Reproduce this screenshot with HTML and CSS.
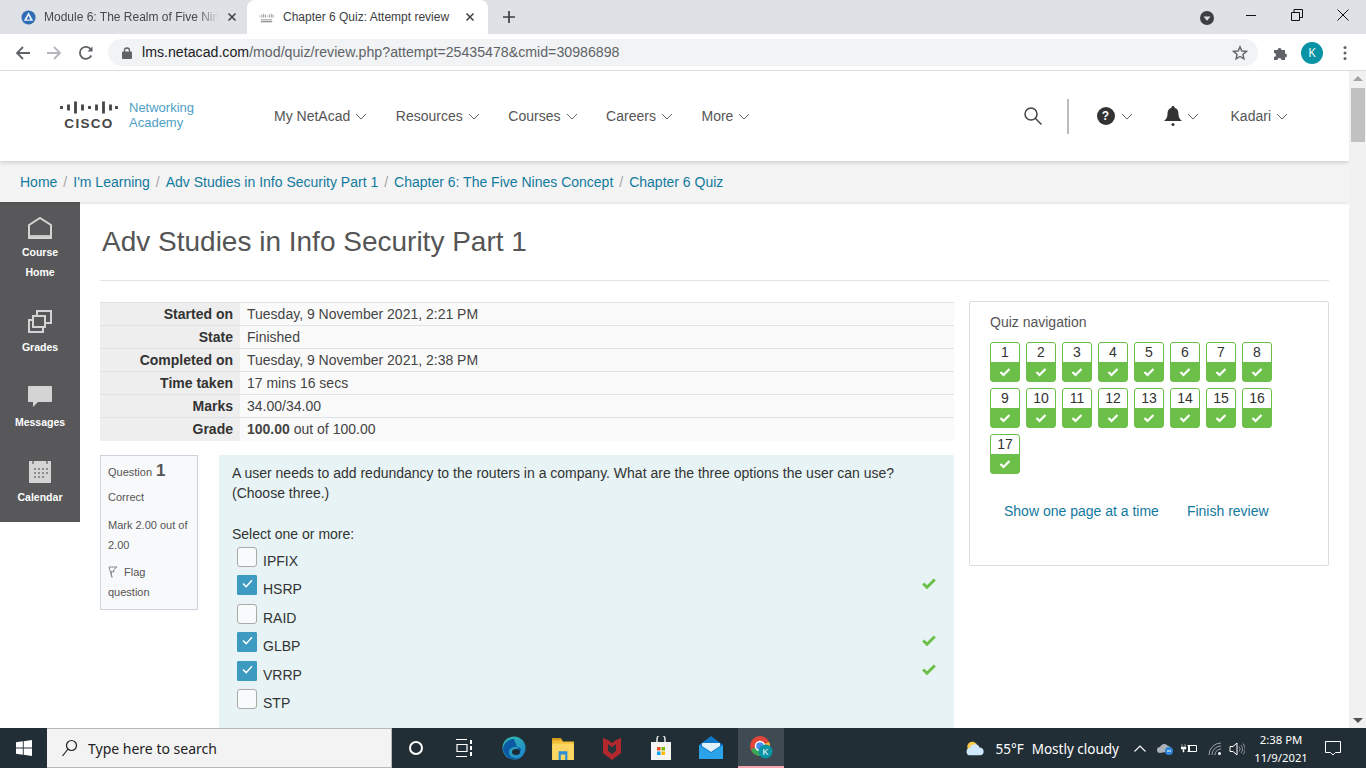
FILE: index.html
```html
<!DOCTYPE html>
<html lang="en">
<head>
<meta charset="utf-8">
<title>Chapter 6 Quiz: Attempt review</title>
<link rel="stylesheet" href="styles.css">
</head>
<body>
<div class="tabstrip">
  <div class="tab">
    <svg class="favicon" viewBox="0 0 16 16"><circle cx="8" cy="8" r="7.5" fill="#2f6db5"/><path d="M8 2.5 13 11.5H3Z" fill="#e8f1fa"/><path d="M8 6 10 10H6Z" fill="#2f6db5"/></svg>
    <span class="tab-title fade">Module 6: The Realm of Five Nine</span>
    <svg class="tab-close" viewBox="0 0 10 10"><path d="M1.5 1.5 8.5 8.5M8.5 1.5 1.5 8.5" stroke="#3c4043" stroke-width="1.5"/></svg>
  </div>
  <div class="tab active">
    <svg class="favicon" viewBox="0 0 16 16"><path d="M1 6v1M3 5v3M5 4v4M7 5v3M9 6v1M11 5v3M13 4v4M15 5v3" stroke="#8a9399" stroke-width="1"/><path d="M2 10h12v1H2zM2 12h12v1H2z" fill="#777"/></svg>
    <span class="tab-title">Chapter 6 Quiz: Attempt review</span>
    <svg class="tab-close" viewBox="0 0 10 10"><path d="M1.5 1.5 8.5 8.5M8.5 1.5 1.5 8.5" stroke="#3c4043" stroke-width="1.5"/></svg>
  </div>
  <svg class="newtab" viewBox="0 0 12 12"><path d="M6 0v12M0 6h12" stroke="#3c4043" stroke-width="1.7"/></svg>
  <div class="winctl">
    <svg class="profile-drop" viewBox="0 0 14 14"><circle cx="7" cy="7" r="7" fill="#3c4043"/><path d="M3.5 5.5h7L7 9.8Z" fill="#dee1e6"/></svg>
    <svg class="wbtn first" viewBox="0 0 12 12"><path d="M1 6.5h10" stroke="#111" stroke-width="1"/></svg>
    <svg class="wbtn" viewBox="0 0 12 12"><path d="M.5 3.5h8v8h-8zM3 3.5V.5h8.500v8H8.500" fill="none" stroke="#111"/></svg>
    <svg class="wbtn" viewBox="0 0 12 12"><path d="M.5.5l11 11M11.500.5l-11 11" stroke="#111"/></svg>
  </div>
</div>

<div class="toolbar">
  <svg class="tool" viewBox="0 0 16 16"><path d="M15 8H2M8 2 2 8l6 6" fill="none" stroke="#5f6368" stroke-width="1.800"/></svg>
  <svg class="tool" viewBox="0 0 16 16"><path d="M1 8h13M8 2l6 6-6 6" fill="none" stroke="#b4b7bb" stroke-width="1.800"/></svg>
  <svg class="tool" viewBox="0 0 16 16"><path d="M13.300 10.500A6 6 0 1 1 13 4.700" fill="none" stroke="#5f6368" stroke-width="1.800"/><path d="M14.500 1.500v5h-5Z" fill="#5f6368"/></svg>
  <div class="omnibox">
    <svg class="lock" viewBox="0 0 10 12"><path d="M2.500 5V3.500a2.500 2.500 0 0 1 5 0V5" fill="none" stroke="#5f6368" stroke-width="1.300"/><rect y="4.500" width="10" height="7.500" rx="1" fill="#5f6368"/></svg>
    <span class="url"><b>lms.netacad.com</b>/mod/quiz/review.php?attempt=25435478&amp;cmid=30986898</span>
    <svg class="star" viewBox="0 0 16 16"><path d="M8 1.800 9.800 6l4.600.4-3.500 3 1 4.500L8 11.500l-3.900 2.400 1-4.500-3.500-3L6.200 6Z" fill="none" stroke="#5f6368" stroke-width="1.400"/></svg>
  </div>
  <svg class="puzzle" viewBox="0 0 16 16"><path d="M1 5h3.500a2 2 0 1 1 4 0H12v3.500a2 2 0 1 1 0 4V15H8.500a2 2 0 1 0-4 0H1v-3a2 2 0 1 0 0-4Z" fill="#5f6368"/></svg>
  <span class="avatar">K</span>
  <svg class="kebab" viewBox="0 0 4 16"><circle cx="2" cy="2.500" r="1.500" fill="#5f6368"/><circle cx="2" cy="8" r="1.500" fill="#5f6368"/><circle cx="2" cy="13.500" r="1.500" fill="#5f6368"/></svg>
</div>

<div class="viewport">
  <div class="page">
    <header class="site-head">
      <div class="logo">
        <div class="cisco">
          <svg class="cisco-bars" viewBox="0 0 58 13"><path d="M1.500 5v3M8.500 3.500v6M15.500 .5v12M22.500 3.500v6M29.500 5v3M36.500 3.500v6M43.500 .5v12M50.500 3.500v6M56.500 5v3" stroke="#444" stroke-width="2.800"/></svg>
          <span class="cisco-word">CISCO</span>
        </div>
        <div class="na">Networking<br>Academy</div>
      </div>
      <nav class="mainnav">
        <a class="nav-item">My NetAcad<svg class="chev" viewBox="0 0 12 7"><path d="M1 1l5 5 5-5" fill="none" stroke="#666"/></svg></a>
        <a class="nav-item">Resources<svg class="chev" viewBox="0 0 12 7"><path d="M1 1l5 5 5-5" fill="none" stroke="#666"/></svg></a>
        <a class="nav-item">Courses<svg class="chev" viewBox="0 0 12 7"><path d="M1 1l5 5 5-5" fill="none" stroke="#666"/></svg></a>
        <a class="nav-item">Careers<svg class="chev" viewBox="0 0 12 7"><path d="M1 1l5 5 5-5" fill="none" stroke="#666"/></svg></a>
        <a class="nav-item">More<svg class="chev" viewBox="0 0 12 7"><path d="M1 1l5 5 5-5" fill="none" stroke="#666"/></svg></a>
      </nav>
      <div class="head-right">
        <svg class="search" viewBox="0 0 18 18"><circle cx="7" cy="7" r="6" fill="none" stroke="#444" stroke-width="1.500"/><path d="M11.500 11.500l6 6" stroke="#444" stroke-width="1.500"/></svg>
        <span class="vline"></span>
        <span class="hi help-i"><span class="help">?</span><svg class="chev" viewBox="0 0 12 7"><path d="M1 1l5 5 5-5" fill="none" stroke="#666"/></svg></span>
        <span class="hi bell-i"><svg class="bell" viewBox="0 0 18 20"><path d="M9 0c1 0 1.500.7 1.600 1.700C13.500 2.500 14.500 5 14.500 8c0 3 1 5 3.500 7H0c2.500-2 3.500-4 3.500-7 0-3 1-5.500 3.900-6.300C7.500.7 8 0 9 0Z" fill="#333"/><circle cx="9" cy="18.500" r="1.500" fill="#333"/></svg><svg class="chev" viewBox="0 0 12 7"><path d="M1 1l5 5 5-5" fill="none" stroke="#666"/></svg></span>
        <span class="hi user-i">Kadari<svg class="chev" viewBox="0 0 12 7"><path d="M1 1l5 5 5-5" fill="none" stroke="#666"/></svg></span>
      </div>
    </header>

    <div class="crumbs">
      <a>Home</a><i>/</i><a>I'm Learning</a><i>/</i><a>Adv Studies in Info Security Part 1</a><i>/</i><a>Chapter 6: The Five Nines Concept</a><i>/</i><a>Chapter 6 Quiz</a>
    </div>

    <div class="body-row">
      <aside class="side">
        <a class="side-item si-home">
          <svg class="si" viewBox="0 0 24 22"><path d="M1 8 12 1l11 7v13H1Z" fill="none" stroke="#d4d4d4" stroke-width="2"/><path d="M2 18h20v2H2z" fill="#d4d4d4" opacity=".9"/></svg>
          <span>Course<br>Home</span>
        </a>
        <a class="side-item si-grades">
          <svg class="si" viewBox="0 0 24 23"><rect x="9" y="1" width="14" height="12" fill="none" stroke="#d4d4d4" stroke-width="2"/><rect x="1" y="10" width="14" height="12" fill="#58585a" stroke="#d4d4d4" stroke-width="2"/><rect x="5" y="6" width="12" height="11" fill="#58585a" stroke="#d4d4d4" stroke-width="2"/></svg>
          <span>Grades</span>
        </a>
        <a class="side-item si-msg">
          <svg class="si" viewBox="0 0 24 21"><path d="M1 0h22c.6 0 1 .4 1 1v14c0 .6-.4 1-1 1H10l-5 5v-5H1c-.6 0-1-.4-1-1V1c0-.6.4-1 1-1Z" fill="#d4d4d4"/></svg>
          <span>Messages</span>
        </a>
        <a class="side-item si-cal">
          <svg class="si" viewBox="0 0 22 22"><rect width="22" height="22" fill="#d4d4d4"/><path d="M5 7h2v2H5zM9 7h2v2H9zM13 7h2v2h-2zM17 7h2v2h-2zM5 11h2v2H5zM9 11h2v2H9zM13 11h2v2h-2zM17 11h2v2h-2zM5 15h2v2H5zM9 15h2v2H9zM13 15h2v2h-2z" fill="#8d8d8f"/><path d="M3 0h2v3H3zM17 0h2v3h-2z" fill="#8d8d8f"/></svg>
          <span>Calendar</span>
        </a>
      </aside>

      <main class="content">
        <h2 class="course-title">Adv Studies in Info Security Part 1</h2>
        <div class="cols">
          <div class="left">
            <table class="summary">
              <tr><th>Started on</th><td>Tuesday, 9 November 2021, 2:21 PM</td></tr>
              <tr><th>State</th><td>Finished</td></tr>
              <tr><th>Completed on</th><td>Tuesday, 9 November 2021, 2:38 PM</td></tr>
              <tr><th>Time taken</th><td>17 mins 16 secs</td></tr>
              <tr><th>Marks</th><td>34.00/34.00</td></tr>
              <tr><th>Grade</th><td><b>100.00</b> out of 100.00</td></tr>
            </table>
            <div class="question">
              <div class="qinfo">
                <div class="qno">Question <b>1</b></div>
                <div class="qstate">Correct</div>
                <div class="qmark">Mark 2.00 out of 2.00</div>
                <div class="qflag"><svg class="flag" viewBox="0 0 10 12"><path d="M1 1h8L5.500 4 6 6 3 5.500 4 11.500M1 1 4 11.500" fill="none" stroke="#888"/></svg>Flag<br>question</div>
              </div>
              <div class="qbody">
                <p class="qtext">A user needs to add redundancy to the routers in a company. What are the three options the user can use?<br>(Choose three.)</p>
                <p class="qprompt">Select one or more:</p>
                <div class="opt"><span class="box"></span><span class="lbl">IPFIX</span></div>
                <div class="opt"><span class="box on"><svg viewBox="0 0 12 10"><path d="M1 5l3.500 3.500L11 1.500" fill="none" stroke="#fff" stroke-width="1.700"/></svg></span><span class="lbl">HSRP</span><svg class="tick" viewBox="0 0 14 11"><path d="M1.200 5.500 5 9.200 12.800 1.500" fill="none" stroke="#6cc04a" stroke-width="3"/></svg></div>
                <div class="opt"><span class="box"></span><span class="lbl">RAID</span></div>
                <div class="opt"><span class="box on"><svg viewBox="0 0 12 10"><path d="M1 5l3.500 3.500L11 1.500" fill="none" stroke="#fff" stroke-width="1.700"/></svg></span><span class="lbl">GLBP</span><svg class="tick" viewBox="0 0 14 11"><path d="M1.200 5.500 5 9.200 12.800 1.500" fill="none" stroke="#6cc04a" stroke-width="3"/></svg></div>
                <div class="opt"><span class="box on"><svg viewBox="0 0 12 10"><path d="M1 5l3.500 3.500L11 1.500" fill="none" stroke="#fff" stroke-width="1.700"/></svg></span><span class="lbl">VRRP</span><svg class="tick" viewBox="0 0 14 11"><path d="M1.200 5.500 5 9.200 12.800 1.500" fill="none" stroke="#6cc04a" stroke-width="3"/></svg></div>
                <div class="opt"><span class="box"></span><span class="lbl">STP</span></div>
              </div>
            </div>
          </div>
          <aside class="quiznav">
            <div class="qn-title">Quiz navigation</div>
            <div class="qn-grid" id="grid">
              <a class="qb"><span>1</span></a><a class="qb"><span>2</span></a><a class="qb"><span>3</span></a><a class="qb"><span>4</span></a><a class="qb"><span>5</span></a><a class="qb"><span>6</span></a><a class="qb"><span>7</span></a><a class="qb"><span>8</span></a><a class="qb"><span>9</span></a><a class="qb"><span>10</span></a><a class="qb"><span>11</span></a><a class="qb"><span>12</span></a><a class="qb"><span>13</span></a><a class="qb"><span>14</span></a><a class="qb"><span>15</span></a><a class="qb"><span>16</span></a><a class="qb"><span>17</span></a>
            </div>
            <div class="qn-links"><a>Show one page at a time</a><a>Finish review</a></div>
          </aside>
        </div>
      </main>
    </div>
  </div>
  <div class="scrollbar">
    <span class="sb-up"></span>
    <span class="sb-thumb"></span>
    <span class="sb-down"></span>
  </div>
</div>

<footer class="taskbar">
  <div class="start"><svg class="win" viewBox="0 0 16 16"><path d="M0 2.300 6.800 1.300V7.500H0ZM7.700 1.200 16 0V7.500H7.700ZM0 8.400H6.800V14.700L0 13.700ZM7.700 8.400H16V16L7.700 14.800Z" fill="#fff"/></svg></div>
  <div class="tsearch">
    <svg class="mag" viewBox="0 0 16 18"><circle cx="10" cy="6.500" r="5" fill="none" stroke="#222" stroke-width="1.200"/><path d="M6.500 10 1 17" stroke="#222" stroke-width="1.200"/></svg>
    <span>Type here to search</span>
  </div>
  <div class="ticons">
    <span class="ti ti-cortana"><svg class="i14" viewBox="0 0 14 14"><circle cx="7" cy="7" r="6" fill="none" stroke="#fff" stroke-width="2"/></svg></span>
    <span class="ti ti-view"><svg class="i18" viewBox="0 0 18 18"><path d="M1 .5h11M1 17.500h11M2 5.500h10v7H2Z" fill="none" stroke="#fff" stroke-width="1.200"/><path d="M15 1h2v4h-2zM15 7h2v4h-2zM15 13h2v4h-2z" fill="#fff"/></svg></span>
    <span class="ti"><svg class="i24" viewBox="0 0 24 24"><defs><linearGradient id="eg" x1="0" y1="0" x2="1" y2="1"><stop offset="0" stop-color="#35c1a8"/><stop offset="1" stop-color="#1b7fd1"/></linearGradient></defs><circle cx="12" cy="12" r="11.500" fill="url(#eg)"/><path d="M12 3c-6 0-10 4-11 9 0 6 5 11 11 11 2 0 3-.5 4-1-5 1-9-2-9-6 0-3 3-5 7-5 3 0 5 1 5 3 0 1-1 2-2 2" fill="#0c59a4"/><ellipse cx="14" cy="16" rx="4" ry="3" fill="#1b2a33"/></svg></span>
    <span class="ti"><svg class="i24" viewBox="0 0 22 22"><path d="M1 2h8l2 3h10v17H1Z" fill="#f2c037"/><path d="M1 2h8l1 2H1Z" fill="#d99a17"/><path d="M1 7h20v15H1Z" fill="#fbd660"/><path d="M7 22v-8h8v8h-2v-5H9v5Z" fill="#2a8fd6"/></svg></span>
    <span class="ti"><svg class="i24" viewBox="0 0 20 24"><path d="M1 2 6 4l4 3 4-3 5-2v15l-9 7-9-7Z" fill="#b3282c"/><path d="M6 8l4 3 4-3v7l-4 3-4-3Z" fill="#28343c"/></svg></span>
    <span class="ti"><svg class="i24" viewBox="0 0 22 24"><path d="M7 6V3a4 4 0 0 1 8 0v3" fill="none" stroke="#e6e6e6" stroke-width="1.500"/><rect x="1" y="6" width="20" height="18" fill="#f5f5f5"/><rect x="7" y="11" width="3.500" height="3.500" fill="#f25022"/><rect x="11.500" y="11" width="3.500" height="3.500" fill="#7fba00"/><rect x="7" y="15.500" width="3.500" height="3.500" fill="#00a4ef"/><rect x="11.500" y="15.500" width="3.500" height="3.500" fill="#ffb900"/></svg></span>
    <span class="ti"><svg class="i24" viewBox="0 0 24 24"><path d="M0 9 12 0l12 9v14H0Z" fill="#0f78c9"/><path d="M0 9l12 8 12-8v14H0Z" fill="#2aa3ea"/><path d="M3 7h18v3l-9 6-9-6Z" fill="#dff1fd"/></svg></span>
    <span class="ti ti-active"><svg class="i24" viewBox="0 0 24 24"><circle cx="11" cy="11" r="10" fill="#e0463a"/><path d="M11 11 2 14a10 10 0 0 0 9 7Z" fill="#3aa757"/><path d="M11 11 20 7a10 10 0 0 1-4 13Z" fill="#f2c037"/><circle cx="11" cy="11" r="4.500" fill="#4a8df0" stroke="#fff" stroke-width="1.500"/><circle cx="16.500" cy="16.500" r="7" fill="#0a93a5"/><text x="16.500" y="19.500" class="chrome-k">K</text></svg></span>
  </div>
  <div class="tray">
    <svg class="cloud" viewBox="0 0 22 16"><circle cx="8" cy="6" r="5.500" fill="#f7c948"/><path d="M6 15.500a4 4 0 0 1-.5-8A5.500 5.500 0 0 1 16 6.800a4.400 4.400 0 0 1 1 8.700Z" fill="#cfe8fb"/></svg>
    <span class="temp">55°F</span>
    <span class="wx">Mostly cloudy</span>
    <svg class="caret" viewBox="0 0 12 7"><path d="M.5 6.500 6 1l5.500 5.500" fill="none" stroke="#fff" stroke-width="1.100"/></svg>
    <svg class="onedrive" viewBox="0 0 17 12"><path d="M3 10a3 3 0 0 1 0-6 4.500 4.500 0 0 1 8-1 3.500 3.500 0 0 1 3 5Z" fill="#aab2b8"/><circle cx="12" cy="8" r="4" fill="#2c86da"/><path d="M10 8h4" stroke="#fff"/></svg>
    <svg class="batt" viewBox="0 0 17 11"><path d="M6.500 2.500h9v6h-9" fill="none" stroke="#fff"/><path d="M1 1v3M4 1v3M0 4h5v2H3v3H2V6H0Z" fill="#fff" stroke="#fff" stroke-width=".5"/><rect x="7" y="3" width="2" height="5" fill="#fff"/></svg>
    <svg class="wifi" viewBox="0 0 14 14"><path d="M1 13A12 12 0 0 1 13 1M4 13A9 9 0 0 1 13 4M7 13A6 6 0 0 1 13 7" fill="none" stroke="#99a1a6" stroke-width="1"/><circle cx="11.500" cy="11.500" r="1.500" fill="#fff"/></svg>
    <svg class="vol" viewBox="0 0 16 14"><path d="M1 4.500h3L8 1v12L4 9.500H1Z" fill="none" stroke="#fff"/><path d="M10 4.500a3.500 3.500 0 0 1 0 5M12 3a6 6 0 0 1 0 8M14 1.500a8 8 0 0 1 0 11" fill="none" stroke="#8a9297"/></svg>
    <div class="clock"><span>2:38 PM</span><span>11/9/2021</span></div>
    <svg class="notif" viewBox="0 0 16 15"><path d="M.5.500h15v11h-5L8 14l-2.500-2.500h-5Z" fill="none" stroke="#fff"/></svg>
  </div>
</footer>
</body>
</html>
```
FILE: styles.css
```css
* { box-sizing: border-box; }
html, body { margin: 0; height: 100%; overflow: hidden; }
body { display: flex; flex-direction: column; width: 1366px; height: 768px; font-family: "Liberation Sans", Arial, sans-serif; font-size: 14px; color: #333; background: #fff; }
p { margin: 0; }
svg { display: block; flex: none; }

/* browser chrome */
.tabstrip { height: 34px; flex: none; background: #dee1e6; display: flex; align-items: flex-end; padding-left: 8px; }
.tab { width: 239px; height: 34px; display: flex; align-items: center; padding: 0 10px 0 13px; border-radius: 8px 8px 0 0; }
.tab.active { background: #fff; width: 241px; padding: 0 13px 0 12px; }
.favicon { width: 15px; height: 15px; }
.tab-title { font-size: 12px; color: #45484c; margin-left: 8px; flex: 1; white-space: nowrap; overflow: hidden; }
.tab.active .tab-title { margin-left: 9px; color: #3c4043; }
.fade { margin-right: 8px; -webkit-mask-image: linear-gradient(90deg, #000 88%, transparent); mask-image: linear-gradient(90deg, #000 88%, transparent); }
.tab-close { width: 10px; height: 10px; }
.newtab { width: 12px; height: 12px; margin: 0 0 11px 15px; }
.winctl { margin-left: auto; height: 34px; display: flex; align-items: center; padding-right: 17px; }
.profile-drop { width: 14px; height: 14px; margin-top: 2px; margin-right: 31px; }
.wbtn { width: 12px; height: 12px; margin-right: 34px; margin-top: -4px; }
.wbtn:last-child { margin-right: 0; }

.toolbar { height: 37px; flex: none; background: #fff; border-bottom: 1px solid #dadce0; display: flex; align-items: center; padding: 1px 0 0 15px; }
.tool { width: 16px; height: 16px; margin-right: 15px; }
.tool:nth-child(3) { margin-left: 1px; margin-right: 14px; }
.omnibox { width: 1150px; height: 27px; background: #f1f3f4; border-radius: 14px; display: flex; align-items: center; padding: 0 10px 0 14px; }
.lock { width: 10px; height: 12px; }
.url { font-size: 14.180px; line-height: 16px; padding-bottom: 2px; color: #5f6368; margin-left: 10px; flex: 1; white-space: nowrap; }
.url b { font-weight: 400; color: #202124; }
.star { width: 16px; height: 16px; }
.puzzle { width: 16px; height: 16px; margin-left: 15px; }
.avatar { width: 22px; height: 22px; border-radius: 50%; background: #0a93a5; color: #fff; font-size: 12px; display: flex; align-items: center; justify-content: center; margin-left: 12px; font-family: "Open Sans", sans-serif; }
.kebab { width: 4px; height: 16px; margin-left: 20px; }

/* page */
.viewport { flex: 1; min-height: 0; display: flex; overflow: hidden; }
.page { width: 1349px; flex: none; overflow: hidden; display: flex; flex-direction: column; }

.site-head { height: 90px; flex: none; display: flex; align-items: center; padding: 0 61px 0 60px; background: #fff; box-shadow: 0 1px 5px rgba(0,0,0,.2); position: relative; z-index: 2; }
.logo { width: 214px; flex: none; display: flex; align-items: flex-start; margin-top: 1px; }
.cisco { width: 69px; display: flex; flex-direction: column; align-items: center; padding-right: 11px; }
.cisco-bars { width: 58px; height: 13px; }
.cisco-word { font-weight: 700; font-size: 13.500px; letter-spacing: 1.300px; color: #444; line-height: 16px; margin-top: 2px; white-space: nowrap; }
.na { font-size: 13px; line-height: 15px; color: #4d9fc6; margin-top: -1px; }
.mainnav { display: flex; gap: 28.600px; }
.nav-item, .hi { display: flex; align-items: center; color: #555; }
.chev { width: 12px; height: 7px; margin-left: 5px; }
.head-right { margin-left: auto; display: flex; align-items: center; }
.search { width: 18px; height: 18px; }
.vline { width: 2px; height: 35px; background: #bbb; margin: 0 28px 0 25px; }
.help { width: 18px; height: 18px; border-radius: 50%; background: #333; color: #fff; font-weight: 700; font-size: 12px; display: flex; align-items: center; justify-content: center; margin-right: 1px; }
.help-i { margin-right: 31px; }
.bell { width: 18px; height: 20px; }
.bell-i { margin-right: 32px; }

.crumbs { height: 41px; flex: none; background: #f4f4f4; display: flex; align-items: center; padding: 1px 0 0 20px; box-shadow: 0 1px 3px rgba(0,0,0,.15); position: relative; z-index: 1; }
.crumbs a { color: #127a9e; }
.crumbs i { font-style: normal; color: #a5a5a5; margin: 0 6px; }

.body-row { flex: 1; display: flex; min-height: 0; }
.side { width: 80px; height: 320px; flex: none; background: #58585a; color: #fff; font-size: 10.500px; font-weight: 700; text-align: center; line-height: 20px; }
.side-item { display: flex; flex-direction: column; align-items: center; }
.si-home { padding-top: 15px; height: 108px; }
.si-home .si { width: 24px; height: 22px; margin-bottom: 3px; }
.si-grades { height: 76px; }
.si-grades .si { width: 24px; height: 23px; margin-bottom: 4px; }
.si-msg { height: 75px; }
.si-msg .si { width: 24px; height: 21px; margin-bottom: 5px; }
.si-cal .si { width: 22px; height: 22px; margin-bottom: 4px; }

.content { flex: 1; min-width: 0; padding: 0 20px; }
.course-title { margin: 0 0 0 2px; height: 78px; padding-top: 21px; font-size: 28px; line-height: 38px; font-weight: 400; color: #555; }
.cols { border-top: 1px solid #e3e3e3; padding-top: 21px; display: flex; gap: 15px; align-items: flex-start; }
.left { width: 854px; flex: none; }

.summary { width: 100%; border-collapse: collapse; }
.summary tr { height: 23px; border-top: 1px solid #dee2e6; }
.summary th { width: 140px; padding: 0 7px 0 0; text-align: right; font-weight: 700; background: #eee; color: #333; }
.summary td { padding: 0 0 0 7px; background: #fafafa; color: #444; }

.question { display: flex; gap: 21px; margin-top: 14px; align-items: flex-start; }
.qinfo { width: 98px; height: 155px; flex: none; border: 1px solid #ccd3dc; background: #f8f9fa; padding: 5px 4px 0 7px; font-size: 11px; line-height: 20px; color: #555; }
.qno b { font-size: 17px; margin-left: 1px; }
.qstate { margin-top: 5px; }
.qmark { margin-top: 8px; }
.qflag { margin-top: 7px; }
.flag { display: inline-block; width: 10px; height: 12px; margin-right: 6px; vertical-align: -2px; }

.qbody { flex: 1; min-height: 290px; background: #e7f3f5; padding: 8px 18px 0 13px; color: #333; line-height: 20px; }
.qprompt { margin-top: 21px; margin-bottom: 3px; }
.opt { height: 28.500px; display: flex; align-items: flex-start; padding-left: 5px; }
.box { width: 20px; height: 20px; flex: none; background: #f8fafb; border: 1px solid #aaa; border-radius: 3px; }
.box.on { background: #3d9ac0; border-color: #3d9ac0; border-radius: 1px; padding: 3px 4px; }
.box.on svg { width: 11px; height: 9px; }
.lbl { line-height: 29px; margin-left: 6px; color: #333; }
.tick { width: 14px; height: 11px; margin: 3px 0 0 auto; }

.quiznav { width: 360px; height: 265px; flex: none; margin-top: -1px; border: 1px solid #ddd; border-radius: 2px; padding: 10px 20px 0; background: #fff; }
.qn-title { line-height: 20px; color: #555; }
.qn-grid { display: flex; flex-wrap: wrap; gap: 6px; margin-top: 10px; width: 290px; }
.qb { width: 30px; height: 40px; border: 1px solid #6cc04a; border-radius: 3px; background: #fff; display: block; color: #333; text-align: center; line-height: 19px; }
.qb span { display: block; height: 19px; }
.qb::after { content: ""; display: block; height: 19px; background: #6cc04a url("data:image/svg+xml,%3Csvg xmlns='http://www.w3.org/2000/svg' viewBox='0 0 12 10'%3E%3Cpath d='M1.500 5 4.500 8 10.500 2' fill='none' stroke='%23fff' stroke-width='2.200'/%3E%3C/svg%3E") center / 12px 10px no-repeat; }
.qn-links { margin: 27px 0 0 14px; display: flex; gap: 28px; line-height: 20px; }
.qn-links a { color: #127a9e; }

/* scrollbar */
.scrollbar { width: 17px; flex: none; background: #f1f1f1; display: flex; flex-direction: column; align-items: center; padding: 5px 0; }
.sb-up { border: 5px solid transparent; border-top: 0; border-bottom: 5px solid #a3a3a3; }
.sb-thumb { width: 14px; height: 54px; background: #c1c1c1; margin-top: 7px; }
.sb-down { margin-top: auto; border: 5px solid transparent; border-bottom: 0; border-top: 5px solid #505050; }

/* taskbar */
.taskbar { height: 40px; flex: none; background: #222e36; display: flex; align-items: center; color: #fff; font-family: "Noto Sans", sans-serif; }
.start { width: 47px; height: 40px; display: flex; align-items: center; justify-content: center; }
.win { width: 16px; height: 16px; }
.tsearch { width: 345px; height: 40px; background: #f3f3f3; border: 1px solid #b5b9bc; border-width: 1px 1px 1px 0; display: flex; align-items: center; padding-left: 14px; color: #222; font-size: 14px; }
.mag { width: 17px; height: 18px; margin-right: 10px; }
.ticons { display: flex; }
.ti { width: 49.250px; height: 40px; display: flex; align-items: center; justify-content: center; }
.ti-cortana { width: 48px; }
.ti-view { width: 49px; padding-right: 2px; }
.ti-active { width: 46px; margin-left: 3px; background: #3f4a52; border-bottom: 2px solid #f4a5ae; }
.i14 { width: 14px; height: 14px; }
.i18 { width: 18px; height: 18px; }
.i24 { width: 24px; height: 24px; }
.chrome-k { font-size: 9px; fill: #fff; text-anchor: middle; font-family: "Liberation Sans", sans-serif; }

.tray { margin-left: auto; display: flex; align-items: center; padding: 1px 25px 0 0; font-size: 13.500px; }
.cloud { width: 20px; height: 15px; }
.temp { margin-left: 10px; }
.wx { margin-left: 8px; }
.caret { width: 12px; height: 7px; margin-left: 15px; }
.onedrive { width: 17px; height: 12px; margin-left: 11px; }
.batt { width: 17px; height: 11px; margin-left: 7px; }
.wifi { width: 14px; height: 14px; margin-left: 10px; }
.vol { width: 16px; height: 14px; margin-left: 7px; }
.clock { width: 62px; margin-left: 5px; display: flex; flex-direction: column; align-items: center; font-size: 11.300px; line-height: 18px; white-space: nowrap; }
.notif { width: 16px; height: 15px; margin-left: 13px; }
```
